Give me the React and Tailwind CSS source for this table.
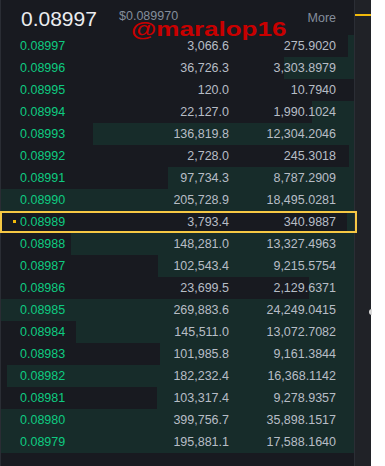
import React from "react";

const rows = [
  ["0.08997", "3,066.6", "275.9020", 6],
  ["0.08996", "36,726.3", "3,303.8979", 70],
  ["0.08995", "120.0", "10.7940", 0],
  ["0.08994", "22,127.0", "1,990.1024", 42],
  ["0.08993", "136,819.8", "12,304.2046", 261],
  ["0.08992", "2,728.0", "245.3018", 5],
  ["0.08991", "97,734.3", "8,787.2909", 186],
  ["0.08990", "205,728.9", "18,495.0281", 353],
  ["0.08989", "3,793.4", "340.9887", 7, true],
  ["0.08988", "148,281.0", "13,327.4963", 283],
  ["0.08987", "102,543.4", "9,215.5754", 196],
  ["0.08986", "23,699.5", "2,129.6371", 45],
  ["0.08985", "269,883.6", "24,249.0415", 353],
  ["0.08984", "145,511.0", "13,072.7082", 278],
  ["0.08983", "101,985.8", "9,161.3844", 194],
  ["0.08982", "182,232.4", "16,368.1142", 347],
  ["0.08981", "103,317.4", "9,278.9357", 197],
  ["0.08980", "399,756.7", "35,898.1517", 353],
  ["0.08979", "195,881.1", "17,588.1640", 353],
];

export default function App() {
  return (
    <div
      className="relative flex w-[385px] h-[466px] bg-white overflow-hidden"
      style={{ fontFamily: '"Liberation Sans", Arial, sans-serif' }}
    >
      <div className="w-[354px] h-full bg-[#181a20] border-l border-[#2a2d34] flex flex-col">
        <div className="h-[35px] flex items-start pl-[20px] pr-[18px]">
          <div className="w-[98px] mt-[8px] text-[21px] leading-none text-[#eaecef]">0.08997</div>
          <div className="mt-[10px] text-[12.5px] leading-none text-[#848e9c]">$0.089970</div>
          <div className="ml-auto mt-[12px] text-[12.5px] leading-none text-[#848e9c]">More</div>
        </div>
        {rows.map(([p, a, t, w, hl]) => (
          <div key={p} className="relative h-[22px] flex items-center pl-[19px] pr-[18px] text-[12.5px] leading-none">
            <div className="absolute right-0 top-0 h-full bg-[#172c2a]" style={{ width: w }} />
            {hl && (
              <>
                <div className="absolute -left-[1px] -right-[3px] top-0 h-full border-2 border-[#f6c844]" />
                <div className="absolute left-[12px] top-[9px] w-[3px] h-[3px] bg-[#f0b90b]" />
              </>
            )}
            <div className="relative flex-1 text-[#0ecb81]">{p}</div>
            <div className="relative w-[100px] text-right text-[#b7bdc6]">{a}</div>
            <div className="relative w-[107px] text-right text-[#b7bdc6]">{t}</div>
          </div>
        ))}
      </div>
      <div className="w-[17px] h-full bg-[#202227] border-l border-[#2b2e35] flex flex-col">
        <div className="mt-[14px] h-[2px] bg-[#f0b90b]" />
      </div>
      <div className="absolute left-[369px] top-[309px] w-[3px] h-[6px] rounded-l-full bg-[#d8d8d8]" />
      <div
        className="absolute left-[131px] top-[19px] text-[20px] leading-none font-bold text-[#c80000] origin-left scale-x-[1.3] whitespace-nowrap"
        style={{ fontFamily: '"Liberation Sans", Arial, sans-serif' }}
      >
        @maralop16
      </div>
    </div>
  );
}
